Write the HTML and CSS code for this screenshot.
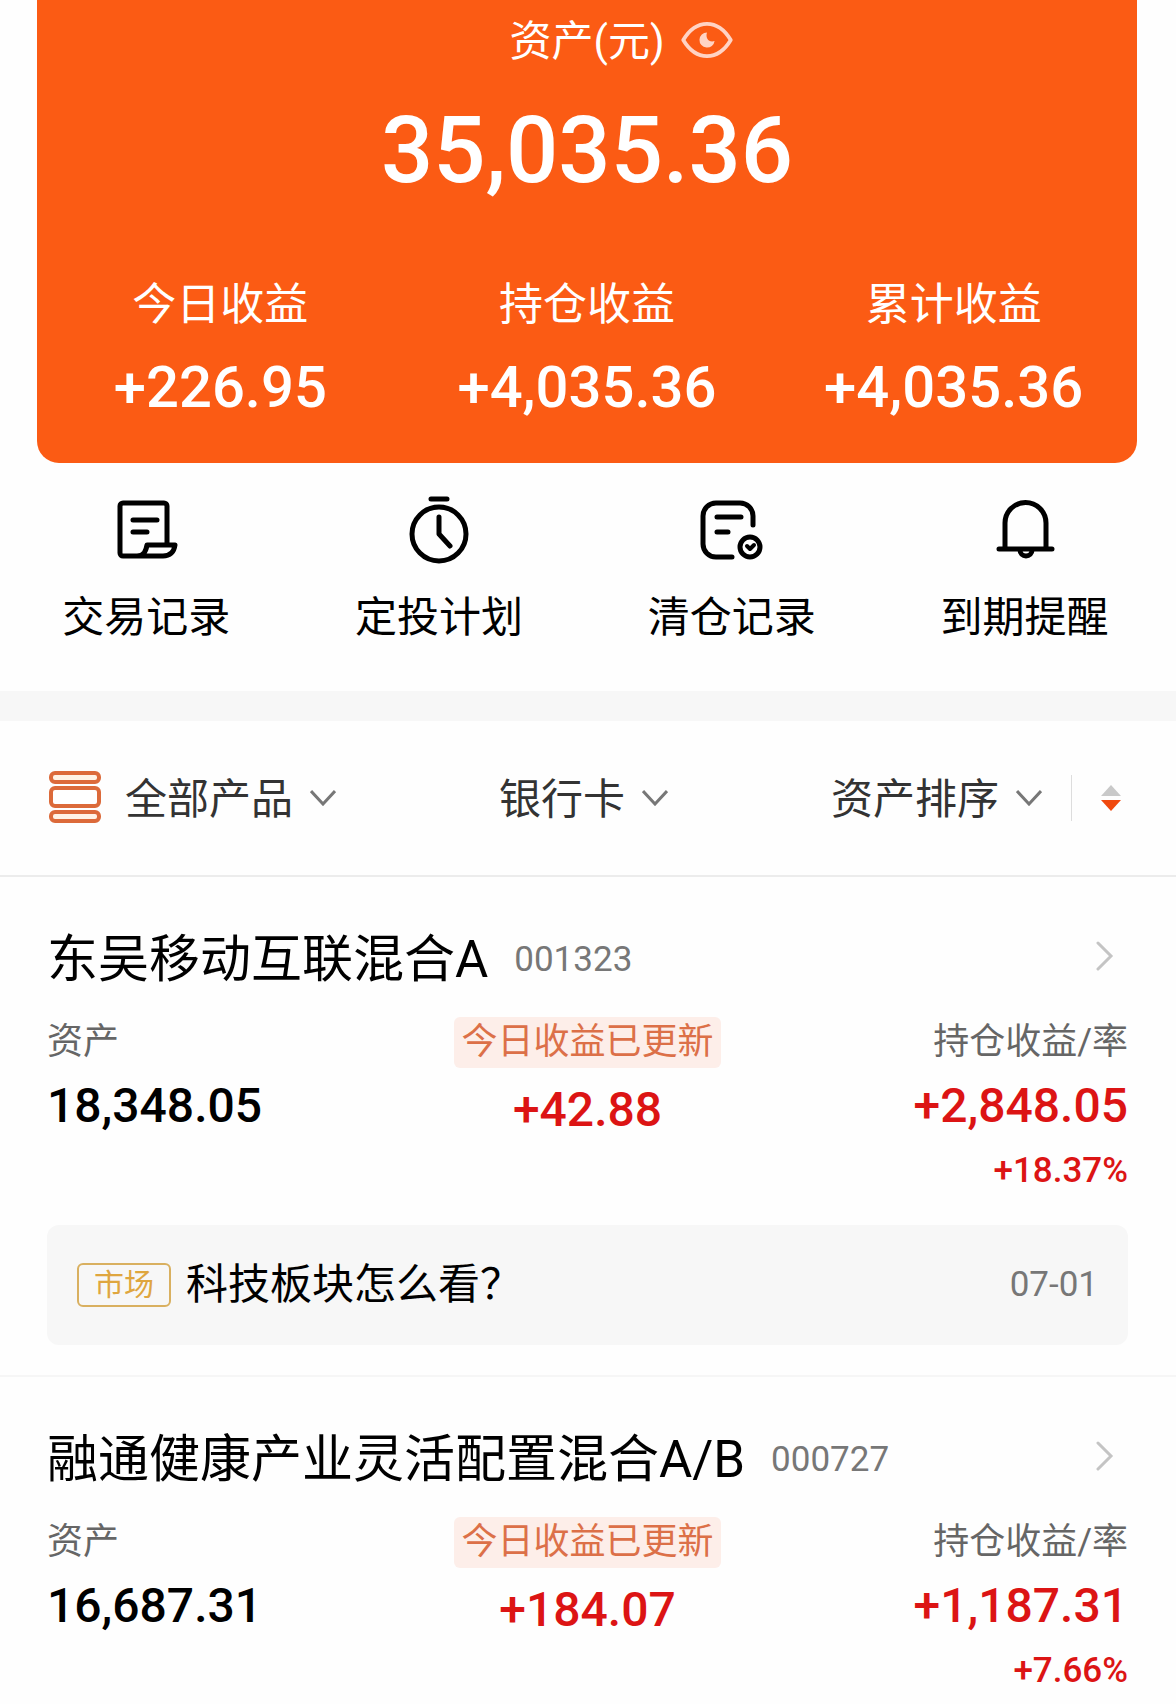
FILE: index.html
```
<!DOCTYPE html>
<html lang="zh-CN">
<head>
    <meta charset="UTF-8">
    <meta name="viewport" content="width=device-width, initial-scale=1.0">
    <title>我的资产</title>
    <link rel="stylesheet" href="styles.css">
</head>
<body>
    <section class="card">
        <div class="card-title">
            <span class="card-label">资产(元)</span>
            <button class="eye" type="button" aria-label="隐藏金额">
                <svg width="52" height="38" viewBox="0 0 54 40">
                    <path d="M2 20C8 10 17 3 27 3s19 7 25 17c-6 10-15 17-25 17S8 30 2 20z" fill="none" stroke="#ffd3c4" stroke-width="4" stroke-linejoin="round"/>
                    <path d="M27 12a8 8 0 1 0 8 9c-6 2-10-3-8-9z" fill="#ffd3c4"/>
                </svg>
            </button>
        </div>
        <div class="total">35,035.36</div>
        <div class="stats">
            <div>
                <div class="stat-label">今日收益</div>
                <div class="stat-value">+226.95</div>
            </div>
            <div>
                <div class="stat-label">持仓收益</div>
                <div class="stat-value">+4,035.36</div>
            </div>
            <div>
                <div class="stat-label">累计收益</div>
                <div class="stat-value">+4,035.36</div>
            </div>
        </div>
    </section>

    <nav class="actions">
        <a href="#">
            <svg class="icon" viewBox="0 0 72 72">
                <path d="M57 51V12a3 3 0 0 0-3-3H13a3 3 0 0 0-3 3v47a3 3 0 0 0 3 3h40c7 0 11-4 12-11H37c-1 6-3 11-10 11"/>
                <path d="M23 26h24M23 38h14"/>
            </svg>
            <span>交易记录</span>
        </a>
        <a href="#">
            <svg class="icon" viewBox="0 0 72 72">
                <circle cx="36" cy="40" r="27"/>
                <path d="M28 5h16M36 23v17l11 12"/>
            </svg>
            <span>定投计划</span>
        </a>
        <a href="#">
            <svg class="icon" viewBox="0 0 72 72">
                <path d="M57 31V22a13 13 0 0 0-13-13H20A13 13 0 0 0 7 22v28a13 13 0 0 0 13 13h16"/>
                <path d="M21 23h24M21 38h11"/>
                <circle cx="54" cy="53" r="10"/>
                <path d="M51 52l3 3 4-4" stroke-width="4"/>
            </svg>
            <span>清仓记录</span>
        </a>
        <a href="#">
            <svg class="icon" viewBox="0 0 72 72">
                <path d="M16 55V29a20 20 0 0 1 41 0v26M10 55h53"/>
                <path d="M31 56a6 6 0 0 0 12 0"/>
            </svg>
            <span>到期提醒</span>
        </a>
    </nav>

    <div class="filters">
        <button class="filter" type="button">
            <svg class="list-icon" width="52" height="52" viewBox="0 0 52 52">
                <rect x="2" y="2" width="48" height="9" rx="4"/>
                <rect x="2" y="17" width="48" height="18" rx="4" fill="#fff"/>
                <rect x="2" y="41" width="48" height="9" rx="4"/>
            </svg>
            全部产品
            <svg class="down" width="26" height="16" viewBox="0 0 26 16"><path d="M1 1l12 13L25 1"/></svg>
        </button>
        <button class="filter" type="button">
            银行卡
            <svg class="down" width="26" height="16" viewBox="0 0 26 16"><path d="M1 1l12 13L25 1"/></svg>
        </button>
        <div class="sort">
            <button class="filter" type="button">
                资产排序
                <svg class="down" width="26" height="16" viewBox="0 0 26 16"><path d="M1 1l12 13L25 1"/></svg>
            </button>
            <button class="order" type="button" aria-label="降序">
                <svg width="20" height="26" viewBox="0 0 20 26">
                    <path d="M10 0l10 11H0z" fill="#c9c9c9"/>
                    <path d="M10 26L0 15h20z" fill="#f0490e"/>
                </svg>
            </button>
        </div>
    </div>

    <article class="fund">
        <a class="fund-head" href="#">
            <span class="fund-name">东吴移动互联混合A</span>
            <span class="fund-code">001323</span>
            <svg class="more" width="18" height="30" viewBox="0 0 18 30"><path d="M2 2l13 13L2 28"/></svg>
        </a>
        <div class="metrics">
            <div>
                <div class="label">资产</div>
                <div class="value">18,348.05</div>
            </div>
            <div class="middle">
                <div class="label updated">今日收益已更新</div>
                <div class="value red">+42.88</div>
            </div>
            <div class="right">
                <div class="label">持仓收益/率</div>
                <div class="value red">+2,848.05</div>
                <div class="rate red">+18.37%</div>
            </div>
        </div>
        <a class="note" href="#">
            <span class="tag">市场</span>
            <span class="note-title">科技板块怎么看？</span>
            <span class="note-date">07-01</span>
        </a>
    </article>

    <article class="fund">
        <a class="fund-head" href="#">
            <span class="fund-name">融通健康产业灵活配置混合A/B</span>
            <span class="fund-code">000727</span>
            <svg class="more" width="18" height="30" viewBox="0 0 18 30"><path d="M2 2l13 13L2 28"/></svg>
        </a>
        <div class="metrics">
            <div>
                <div class="label">资产</div>
                <div class="value">16,687.31</div>
            </div>
            <div class="middle">
                <div class="label updated">今日收益已更新</div>
                <div class="value red">+184.07</div>
            </div>
            <div class="right">
                <div class="label">持仓收益/率</div>
                <div class="value red">+1,187.31</div>
                <div class="rate red">+7.66%</div>
            </div>
        </div>
    </article>
</body>
</html>
```
FILE: styles.css
```
* {
    box-sizing: border-box;
}
body {
    margin: 0;
    background: #fefefe;
    color: #000;
    font-family: Roboto, "Noto Sans CJK SC", sans-serif;
    font-size: 42px;
    line-height: 60px;
}
a {
    color: inherit;
    text-decoration: none;
}
button {
    padding: 0;
    border: 0;
    background: none;
    color: inherit;
    font: inherit;
    cursor: pointer;
}
svg {
    display: block;
    flex-shrink: 0;
}

/* orange summary card */
.card {
    margin: 0 39px 0 37px;
    padding: 12px 0 46px;
    background: #fb5b14;
    color: #fff;
    text-align: center;
    border-radius: 0 0 22px 22px;
}
.card-title {
    display: grid;
    grid-template-columns: 1fr auto 1fr;
    align-items: center;
}
.card-label {
    grid-column: 2;
}
.eye {
    justify-self: start;
    margin: 0 0 4px 16px;
}
.total {
    margin-top: 24px;
    font-size: 92px;
    font-weight: 500;
    line-height: 110px;
}
.stats {
    display: grid;
    grid-template-columns: repeat(3, 1fr);
    margin-top: 69px;
}
.stat-label {
    font-size: 44px;
}
.stat-value {
    margin-top: 22px;
    font-size: 58px;
    font-weight: 500;
}

/* shortcuts */
.actions {
    display: grid;
    grid-template-columns: repeat(4, 1fr);
    padding: 31px 5px 43px 0;
}
.actions a {
    display: flex;
    flex-direction: column;
    align-items: center;
    gap: 22px;
}
.icon {
    width: 72px;
    height: 72px;
    fill: none;
    stroke: #000;
    stroke-width: 5;
    stroke-linecap: round;
    stroke-linejoin: round;
}

/* filter bar */
.filters {
    display: flex;
    justify-content: space-between;
    align-items: center;
    padding: 49px 55px 45px 49px;
    border-top: 30px solid #f7f7f7;
    border-bottom: 2px solid #ececec;
    color: #333;
}
.filter {
    display: flex;
    align-items: center;
}
.list-icon {
    margin: 0 24px 6px 0;
    fill: #fff3e6;
    stroke: #dc6a3a;
    stroke-width: 4;
}
.down {
    margin: 0 0 4px 17px;
    fill: none;
    stroke: #777;
    stroke-width: 3;
}
.sort {
    display: flex;
    align-items: center;
}
.order {
    margin: 0 0 4px 29px;
    padding: 10px 0 10px 29px;
    border-left: 1px solid #ddd;
}

/* fund list */
.fund {
    padding: 53px 48px 30px 47px;
    border-bottom: 2px solid #f6f6f6;
}
.fund:last-child {
    padding-bottom: 0;
    border-bottom: 0;
}
.fund-head {
    display: flex;
    align-items: center;
}
.fund-name {
    font-size: 51px;
}
.fund-code {
    margin-left: 26px;
    color: #777;
    font-size: 35px;
}
.more {
    margin: 0 14px 8px auto;
    fill: none;
    stroke: #c4c4c4;
    stroke-width: 3;
    stroke-linecap: round;
}
.metrics {
    display: grid;
    grid-template-columns: 1fr auto 1fr;
    margin-top: 27px;
}
.label {
    color: #666;
    font-size: 36px;
    line-height: 51px;
}
.updated {
    padding: 0 7px;
    margin-bottom: 17px;
    background: #fdeee9;
    color: #dc7048;
    border-radius: 6px;
}
.value {
    margin-top: 13px;
    font-size: 48px;
    font-weight: 500;
    line-height: 50px;
}
.middle {
    text-align: center;
}
.middle .value {
    margin-top: 0;
}
.right {
    text-align: right;
}
.rate {
    margin-top: 20px;
    font-size: 35px;
    font-weight: 500;
    line-height: 40px;
}
.red {
    color: #dc1414;
}
.note {
    display: flex;
    align-items: center;
    margin-top: 34px;
    padding: 30px;
    background: #f7f7f7;
    border-radius: 12px;
}
.tag {
    padding: 0 15px;
    border: 2px solid #d9b060;
    border-radius: 6px;
    color: #dfa63f;
    font-size: 30px;
    line-height: 40px;
}
.note-title {
    margin-left: 15px;
}
.note-date {
    margin-left: auto;
    color: #777;
    font-size: 35px;
}
```
